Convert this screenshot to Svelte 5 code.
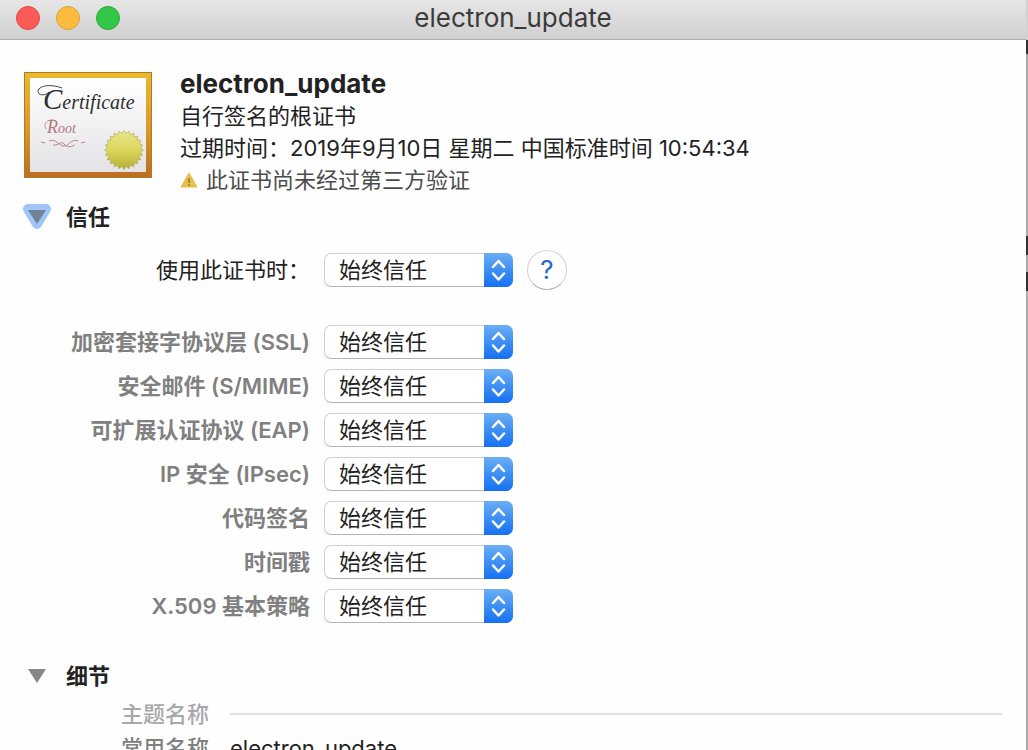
<script lang="ts">
  type Policy = { id: string; label: string; value: string };

  const choices = ['使用系统默认', '始终信任', '永不信任'];

  let overall = $state('始终信任');
  let trustOpen = $state(true);
  let detailsOpen = $state(true);

  let policies: Policy[] = $state([
    { id: 'ssl', label: '加密套接字协议层 (SSL)', value: '始终信任' },
    { id: 'smime', label: '安全邮件 (S/MIME)', value: '始终信任' },
    { id: 'eap', label: '可扩展认证协议 (EAP)', value: '始终信任' },
    { id: 'ipsec', label: 'IP 安全 (IPsec)', value: '始终信任' },
    { id: 'code', label: '代码签名', value: '始终信任' },
    { id: 'timestamp', label: '时间戳', value: '始终信任' },
    { id: 'x509', label: 'X.509 基本策略', value: '始终信任' },
  ]);

  // Serrated edge of the gold seal
  const seal = Array.from({ length: 48 }, (_, i) => {
    const r = i % 2 ? 16.5 : 19.5;
    const a = (i * Math.PI) / 24;
    return `${(100 + r * Math.cos(a)).toFixed(1)},${(78 + r * Math.sin(a)).toFixed(1)}`;
  }).join(' ');
</script>

{#snippet popup(id: string, get: () => string, set: (v: string) => void)}
  <span class="popup">
    <select {id} bind:value={get, set}>
      {#each choices as choice}
        <option>{choice}</option>
      {/each}
    </select>
    <span class="cap">
      <svg width="29" height="34" viewBox="0 0 29 34" aria-hidden="true">
        <path d="M9 14l5.500-6 5.500 6M9 20.500l5.500 6 5.500-6" />
      </svg>
    </span>
  </span>
{/snippet}

<div class="desktop">
  <main class="window">
    <header class="titlebar">
      <div class="lights">
        <button class="light close" aria-label="关闭"></button>
        <button class="light minimize" aria-label="最小化"></button>
        <button class="light zoom" aria-label="缩放"></button>
      </div>
      <span class="title">electron_update</span>
    </header>

    <section class="summary">
      <svg class="certificate" width="128" height="106" viewBox="0 0 128 106">
        <defs>
          <linearGradient id="frame" x2="0" y2="1">
            <stop offset="0" stop-color="#e9b92f" />
            <stop offset="0.5" stop-color="#dc9c2b" />
            <stop offset="1" stop-color="#bd6c20" />
          </linearGradient>
          <linearGradient id="paper" x2="0" y2="1">
            <stop offset="0" stop-color="#ffffff" />
            <stop offset="1" stop-color="#e3e3e6" />
          </linearGradient>
          <linearGradient id="gold" x2="0" y2="1">
            <stop offset="0" stop-color="#e8e68c" />
            <stop offset="0.5" stop-color="#dcd75c" />
            <stop offset="1" stop-color="#b5ae35" />
          </linearGradient>
        </defs>
        <rect width="128" height="106" fill="url(#frame)" />
        <rect x="0.5" y="0.5" width="127" height="105" fill="none" stroke="#b07a20" />
        <rect x="6" y="6" width="116" height="94" fill="url(#paper)" />
        <path
          d="M38 16C28 12 15 13 14 19c0 5 7 5 11 1"
          fill="none"
          stroke="#444"
        />
        <text x="19" y="37" class="script" fill="#2e2e32"><tspan font-size="29">C</tspan><tspan font-size="20">ertificate</tspan></text>
        <path d="M30 48c-7-1-11 4-8 9" fill="none" stroke="#c88f94" />
        <text x="23" y="61" class="script" fill="#b4787e"><tspan font-size="18">R</tspan><tspan font-size="14">oot</tspan></text>
        <path
          d="M17 70l4 1M57 71l4-1M25 69c7-3 10 5 15 5s8-8 14-5M29 73c6 1 8-5 11-1s6 3 11 1"
          fill="none"
          stroke="#bd8287"
        />
        <polygon points={seal} fill="url(#gold)" stroke="#b5af5a" stroke-width="0.7" />
      </svg>
      <div class="facts">
        <h1>electron_update</h1>
        <p>自行签名的根证书</p>
        <p>过期时间：2019年9月10日 星期二 中国标准时间 10:54:34</p>
        <p class="warning">
          <svg width="18" height="18" viewBox="0 0 18 18" aria-hidden="true">
            <path d="M9 2L17 16H1Z" fill="#e8c04a" stroke="#e3bd4c" stroke-linejoin="round" />
            <path d="M9 7v5M9 13v2" stroke="#94782c" stroke-width="1.500" />
          </svg>
          此证书尚未经过第三方验证
        </p>
      </div>
    </section>

    <section>
      <h2>
        <button class="disclosure" aria-expanded={trustOpen} onclick={() => (trustOpen = !trustOpen)}>
          <svg class:closed={!trustOpen} width="30" height="28" viewBox="0 0 30 28" aria-hidden="true">
            <path
              d="M6 6H24L15 21Z"
              fill="#a0c5f8"
              stroke="#a0c5f8"
              stroke-width="10"
              stroke-linejoin="round"
            />
            <path d="M6 7H24L15 21Z" fill="#6f8296" />
          </svg>
          信任
        </button>
      </h2>
      {#if trustOpen}
        <div class="row overall">
          <label for="overall">使用此证书时：</label>
          {@render popup('overall', () => overall, (v) => (overall = v))}
          <button class="help" aria-label="帮助">?</button>
        </div>
        <div class="policies">
          {#each policies as policy (policy.id)}
            <div class="row">
              <label for={policy.id}>{policy.label}</label>
              {@render popup(policy.id, () => policy.value, (v) => (policy.value = v))}
            </div>
          {/each}
        </div>
      {/if}
    </section>

    <section class="details">
      <h2>
        <button class="disclosure" aria-expanded={detailsOpen} onclick={() => (detailsOpen = !detailsOpen)}>
          <svg class:closed={!detailsOpen} width="30" height="28" viewBox="0 0 30 28" aria-hidden="true">
            <path d="M6 7H24L15 21Z" fill="#878787" />
          </svg>
          细节
        </button>
      </h2>
      {#if detailsOpen}
        <dl>
          <dt class="group">主题名称</dt>
          <dd class="rule"></dd>
          <dt>常用名称</dt>
          <dd>electron_update</dd>
        </dl>
      {/if}
    </section>
  </main>
  <div class="behind"></div>
</div>

<style>
  :global(body) {
    overflow: hidden;
  }

  .desktop {
    display: flex;
    height: 100vh;
    overflow: hidden;
    font-family: Inter, 'Noto Sans CJK SC', sans-serif;
    font-size: 22px;
    line-height: 32px;
    color: #222;
  }

  .window {
    flex: 1;
    background: #fefefe;
  }

  /* Edge of the window underneath, with slivers of its text */
  .behind {
    width: 2px;
    background: linear-gradient(
      #d2d2d2 40px,
      #333 40px 54px,
      #aaa 54px 236px,
      #333 236px 255px,
      #aaa 255px 272px,
      #333 272px 291px,
      #aaa 291px
    );
  }

  .titlebar {
    display: grid;
    grid-template-columns: 1fr auto 1fr;
    align-items: center;
    box-sizing: border-box;
    height: 40px;
    padding: 0 16px 3px;
    background: linear-gradient(#e6e6e6, #d0d0d0);
    border-bottom: 1px solid #aeaeae;
  }

  .title {
    font-size: 26px;
    color: #3b3b3b;
  }

  .lights {
    display: flex;
    gap: 16px;
  }

  .light {
    width: 24px;
    height: 24px;
    padding: 0;
    border: 1px solid;
    border-radius: 50%;
  }

  .close {
    background: #fc5b57;
    border-color: #df4744;
  }

  .minimize {
    background: #fdbc40;
    border-color: #dea035;
  }

  .zoom {
    background: #33c748;
    border-color: #27aa35;
  }

  .summary {
    display: flex;
    gap: 28px;
    padding: 28px 24px 0;
  }

  .certificate {
    flex: none;
    margin-top: 4px;
  }

  .script {
    font-family: 'Liberation Serif', serif;
    font-style: italic;
  }

  h1,
  h2,
  p,
  dl,
  dd {
    margin: 0;
  }

  h1 {
    font-size: 26px;
    font-weight: 700;
    line-height: 32px;
  }

  .warning {
    display: flex;
    align-items: center;
    gap: 8px;
    color: #4c4c4c;
  }

  h2 {
    padding: 5px 22px;
    font-size: 22px;
    line-height: 32px;
  }

  .disclosure {
    display: flex;
    align-items: center;
    gap: 14px;
    padding: 0;
    background: none;
    border: 0;
    font: inherit;
    color: #222;
  }

  .closed {
    transform: rotate(-90deg);
  }

  .row {
    display: grid;
    grid-template-columns: 310px 189px 40px;
    gap: 14px;
    align-items: center;
    height: 44px;
  }

  .overall {
    margin-top: 10px;
  }

  label {
    text-align: right;
    white-space: nowrap;
  }

  .policies {
    margin-top: 28px;
  }

  .policies label {
    font-weight: 600;
    color: #808080;
  }

  .popup {
    display: grid;
    grid-template-columns: 1fr 29px;
    height: 34px;
  }

  select {
    grid-area: 1 / 1 / 2 / 3;
    appearance: none;
    padding: 0 14px;
    background: #fff;
    border: 1px solid #d0d0d0;
    border-bottom-color: #b4b4b4;
    border-radius: 7px;
    font: inherit;
    color: #222;
  }

  .cap {
    grid-area: 1 / 2;
    z-index: 1;
    background: linear-gradient(#6aaef5, #1470f3);
    border-radius: 0 7px 7px 0;
    pointer-events: none;
  }

  .cap svg {
    display: block;
    fill: none;
    stroke: #fff;
    stroke-width: 2.5;
    stroke-linecap: round;
    stroke-linejoin: round;
  }

  .help {
    width: 40px;
    height: 40px;
    padding: 0;
    background: #fff;
    border: 1px solid #d0d0d0;
    border-bottom-color: #b4b4b4;
    border-radius: 50%;
    font: inherit;
    font-size: 26px;
    color: #2467c6;
  }

  .details {
    margin-top: 27px;
  }

  dl {
    display: grid;
    grid-template-columns: 209px 1fr;
    column-gap: 21px;
    padding-right: 24px;
    line-height: 34px;
  }

  dt {
    font-weight: 500;
    text-align: right;
    color: #808080;
  }

  .group {
    color: #a8a8a8;
  }

  .rule {
    align-self: center;
    height: 2px;
    background: #e0e0e0;
  }
</style>
